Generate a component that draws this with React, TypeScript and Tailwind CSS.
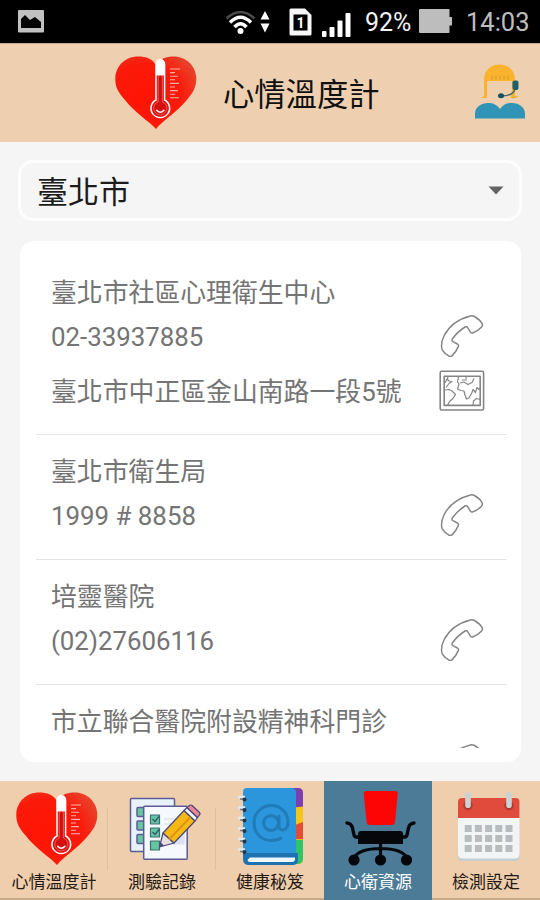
import { useState } from 'react'
import type { ReactNode } from 'react'

interface Resource {
  name: string
  phone: string
  address?: string
}

const resources: Resource[] = [
  { name: '臺北市社區心理衛生中心', phone: '02-33937885', address: '臺北市中正區金山南路一段5號' },
  { name: '臺北市衛生局', phone: '1999 # 8858' },
  { name: '培靈醫院', phone: '(02)27606116' },
  { name: '市立聯合醫院附設精神科門診', phone: '' },
]

function HeartIcon() {
  return (
    <svg width="82" height="74" viewBox="0 0 82 74" fill="none">
      <defs>
        <radialGradient id="heart" cx="0.35" cy="0.55" r="0.7">
          <stop offset="0" stopColor="#ff1403" />
          <stop offset="0.65" stopColor="#fb1a0a" />
          <stop offset="1" stopColor="#e8402a" />
        </radialGradient>
      </defs>
      <path d="M41 73C35 66 20 57 10 44C4 37 0 32 0.3 22C1 9 11 0.5 23 0.5C31 0.5 38 3 41 9C44 3 51 0.5 59 0.5C71 0.5 81 10 81.3 22C81.6 32 77 38 71 45C61 57 47 65 41 73Z" fill="url(#heart)" />
      <path d="M41 44V8a4.3 4.3 0 0 1 8.6 0V44a9.3 9.3 0 1 1-8.6 0Z" fill="#e3100c" stroke="#fff" strokeWidth="1.5" />
      <path d="M41 19.5V8a4.3 4.3 0 0 1 8.6 0V19.5Z" fill="#fff" />
      <path d="M43.2 21.5a2.1 2.1 0 0 1 4.2 0V46a6.6 6.6 0 1 1-4.2 0Z" fill="#d50f10" stroke="#f7a49b" strokeWidth="0.5" />
      <path d="M41.7 54.3q3.6 4 7.2 0" stroke="#fff" strokeWidth="1.5" strokeLinecap="round" />
      <path d="M55 13h10M55 16.6h5M55 20.2h8M55 23.8h5M55 27.4h9M55 31h5M55 34.6h8M55 38.2h5M55 41.8h9" stroke="#ffb3a3" strokeWidth="1.1" />
    </svg>
  )
}

function AgentIcon() {
  return (
    <svg width="50" height="55" viewBox="0 0 50 55" fill="none">
      <path d="M9 32V16C9 6 16 0.5 24.5 0.5S40 6 40 16V32h4l-4 2h-4V17H12v17H6l3-2Z" fill="#fab32e" />
      <path d="M12 16h25v9c0 8-5 13-12 13S12 33 12 25Z" fill="#f0cfae" />
      <path d="M11 14h27v3H11Z" fill="#fab32e" />
      <path d="M17 12v3.5M21 12v3.500M25 12v3.500M29 12v3.500M33 12v3.500" stroke="#c99436" strokeWidth="0.9" />
      <path d="M0 54.5V50C0 43 6 39 13 39C18 39 21 40 25 45C29 40 32 39 37 39C44 39 50 43 50 50V54.5Z" fill="#2f94b6" />
      <path d="M40 25c-1 4-6 7-14 7" stroke="#4f6264" strokeWidth="1.3" />
      <rect x="37.5" y="16.5" width="6" height="9.5" rx="2" fill="#1c6070" />
      <ellipse cx="26" cy="31.7" rx="3" ry="2.5" fill="#125062" />
    </svg>
  )
}

function PhoneIcon() {
  return (
    <svg width="44" height="42" viewBox="-1 0 44 42" fill="none" stroke="#858585" strokeWidth="1.5" strokeLinejoin="round">
      <path d="M29.5 0.9Q31.5 0.5 33.5 1.5Q39 4.7 41.3 9Q41.8 10.5 40.6 11.9Q36.5 16.4 31.5 18Q30.4 18.3 29.4 17.2L26.8 12.8Q25.8 11 24 12Q16.2 17 11.5 23.8Q10.3 25.5 12 26.6L16.4 29Q17.9 30 17.3 31.6Q15 37 11 40.9Q9.6 42 8 41.1Q3.7 38.8 1.2 34.8Q-0.8 28.5 3.2 20.5Q11 5.5 29.5 0.9Z" />
    </svg>
  )
}

function MapIcon() {
  return (
    <svg width="46" height="41" viewBox="0 0 46 41" fill="none" stroke="#858585" strokeWidth="1.2" strokeLinejoin="round">
      <rect x="1.2" y="1.2" width="43.4" height="38.8" rx="1.5" strokeWidth="1.6" />
      <rect x="5.2" y="6.2" width="36" height="29.2" strokeWidth="1.6" />
      <path d="M6 13l2-4 2 2 3 0.5-3 2-3 4M6 20l4-0.5 3 1.500 3.500 3.500-2.500 4-3.500 3-2 4M9 7l-1 3" />
      <path d="M19.500 7l-1 5 1.500 2-1.500 5 3.500 1.500 3 .5 1 4 1.500 4 2.500-1 3-5.500 1-3 2.500 3 .5-2 1-3 2 2 1.500-2M21 13l4-1 4 2.500 4-2 2-4M23 10h5M27 7v2" />
      <path d="M34 35l.5-4 3-2.500 3.500 1" />
    </svg>
  )
}

function RecordIcon() {
  return (
    <svg width="108" height="86" viewBox="0 0 108 86" fill="none" strokeLinejoin="round">
      <g stroke="#5c5b98" strokeWidth="1.5">
        <rect x="22.5" y="17.5" width="44" height="53" rx="1" fill="#e8f1f8" />
        <rect x="29" y="26.5" width="9" height="9" rx="1" fill="#67c6a2" />
        <rect x="29" y="40" width="9" height="9" rx="1" fill="#67c6a2" />
        <rect x="29" y="53.5" width="9" height="9" rx="1" fill="#67c6a2" />
        <rect x="35.7" y="25.3" width="43.5" height="53" rx="1" fill="#f5f9fd" />
      </g>
      <path d="M56 38h13M56 43h8M70 52l6-7v18H58Z" stroke="#dde3f2" fill="#dce0f4" strokeWidth="1.4" />
      <g fill="#67c6a2" stroke="#3d6e75" strokeWidth="1.2">
        <rect x="42.5" y="34" width="9" height="9" />
        <rect x="42.5" y="47" width="9" height="9" />
        <rect x="42.5" y="60" width="9" height="9" />
      </g>
      <path d="M44.5 38l2.5 2.5 4-5M44.5 51l2.5 2.5 4-5" stroke="#2e5967" strokeWidth="1.3" />
      <g stroke="#48477c" strokeWidth="1.2">
        <path d="M51.500 66l3.500-14 11 10Z" fill="#e8dce0" />
        <path d="M55 52L76 29.500l11 10.500L66 62Z" fill="#f7b911" />
        <path d="M76 29.500l3-3 10.500 10-2.500 3.500Z" fill="#eef2fa" />
        <path d="M79 26.500l2.500-2q1.200-1 2.600 0l7.400 7q1.200 1.200 0 2.500l-2 2.500Z" fill="#ec8791" />
      </g>
      <path d="M61 58.500L82.500 36" stroke="#dd941b" strokeWidth="2" />
      <path d="M51.500 66l1.200-4.500 3.300 3Z" fill="#48477c" />
    </svg>
  )
}

function BookIcon() {
  return (
    <svg width="108" height="86" viewBox="0 0 108 86" fill="none">
      <path d="M74 7h8q5 0 5 5V78q0 5-5 5h-8Z" fill="#ebb91b" />
      <path d="M76 7h6q5 0 5 5v14.5H76Z" fill="#7c3eb0" />
      <path d="M79 26.5l8-1v17l-8 2Z" fill="#f5c518" />
      <path d="M79 44l8-3v17H79Z" fill="#e54c35" />
      <path d="M79 59h8V77q0 6-6 6h-4Z" fill="#2fc465" />
      <path d="M31 7H75q5 0 5 5V74H27V11q0-4 4-4Z" fill="#2b96dc" />
      <path d="M27 72H82V80q-1 4-5 4H33q-6 0-6-6Z" fill="#1d72af" />
      <path d="M34 76.5H79V78q0 3-3 3H34q-2.5 0-2.5-2.3Z" fill="#eff6fa" />
      <path d="M22 16h7M22 26.5h7M22 37h7M22 47.5h7M22 58h7M22 68.5h7" stroke="#e4e9ea" strokeWidth="2.3" />
      <path d="M24 18h5M24 28.5h5M24 39h5M24 49.5h5M24 60h5M24 70.5h5" stroke="#6b7b88" strokeWidth="1.4" />
      <g fill="#22364a">
        <circle cx="28.5" cy="18.5" r="2" />
        <circle cx="28.5" cy="29" r="2" />
        <circle cx="28.5" cy="39.5" r="2" />
        <circle cx="28.5" cy="50" r="2" />
        <circle cx="28.5" cy="60.5" r="2" />
        <circle cx="28.5" cy="71" r="2" />
      </g>
      <circle cx="55" cy="42" r="7.5" stroke="#217bb8" strokeWidth="3" />
      <path d="M63 34v11c0 6 9 5.5 9-4C72 31 64 24.5 55 24.5S38 32 38 42s7.500 17.500 17 17.500c4.500 0 8-1 11-3" stroke="#217bb8" strokeWidth="3" />
    </svg>
  )
}

function ChairIcon() {
  return (
    <svg width="108" height="86" viewBox="0 0 108 86" fill="none">
      <path d="M43 10H71q3 0 2.7 3L71 41q-.4 3-3.5 3H46q-3 0-3.4-3L39.7 13q-.3-3 3.3-3Z" fill="#fe0505" />
      <path d="M37 50H76q3 0 3 3V63H34V53q0-3 3-3Z" fill="#05070a" />
      <path d="M23 42q4.500.5 5.500 5l1.500 7q.4 2 2.500 2h3M90 42q-4.500.5-5.500 5l-1.500 7q-.4 2-2.500 2h-3" stroke="#05070a" strokeWidth="3.4" strokeLinecap="round" />
      <path d="M56.5 62V79M30 77q5-9.500 26.500-9.500T83 77" stroke="#05070a" strokeWidth="3.2" />
      <circle cx="30" cy="79" r="5.6" fill="#05070a" />
      <circle cx="56.5" cy="79" r="5.6" fill="#05070a" />
      <circle cx="82.5" cy="79" r="5.6" fill="#05070a" />
    </svg>
  )
}

function CalendarIcon() {
  return (
    <svg width="108" height="86" viewBox="0 0 108 86" fill="none">
      <rect x="26" y="20" width="61.5" height="60" rx="4.5" fill="#c5ced1" />
      <rect x="26" y="18" width="61.5" height="59.5" rx="4.5" fill="#f1f5f6" />
      <path d="M26 37V21q0-4 4-4H83.500q4 0 4 4V37Z" fill="#e14b3b" />
      <circle cx="36" cy="24.5" r="4.8" fill="#b43a2f" />
      <circle cx="77" cy="24.5" r="4.8" fill="#b43a2f" />
      <rect x="33.2" y="11" width="5.6" height="16" rx="2.8" fill="#cad2d5" />
      <rect x="74.2" y="11" width="5.6" height="16" rx="2.8" fill="#cad2d5" />
      <path d="M32.7 47.500H81M32.700 57.500H81M32.700 67.500H81" stroke="#b7bcbf" strokeWidth="7" strokeDasharray="7 3.2" />
    </svg>
  )
}

function StatusBar() {
  return (
    <div className="flex h-[43px] shrink-0 items-center bg-black font-['Roboto',sans-serif] text-[25px] leading-[43px] text-white">
      <svg className="ml-[18px]" width="26" height="23" viewBox="0 0 26 23">
        <rect width="26" height="22.5" rx="1" fill="#c1c1c1" />
        <path d="M3 18V9l4-4 5 5 5-3 6 5v6Z" fill="#050505" />
      </svg>
      <svg className="ml-[181px]" width="31" height="26" viewBox="0 0 31 26" fill="none" strokeWidth="3.5">
        <path d="M1.5 9.500Q15.500-3.500 29.500 9.500" stroke="#4b4b4b" strokeWidth="2.5" />
        <path d="M5 13.500Q15.500 3 26 13.500M9.500 18Q15.500 11.500 21.500 18" stroke="#fff" />
        <circle cx="15.5" cy="22" r="3" fill="#fff" />
      </svg>
      <svg className="ml-[4px]" width="10" height="22" viewBox="0 0 10 22" fill="#fff">
        <path d="M5 0l4.500 8.500H.5ZM5 21.500L.5 12.500h9Z" />
      </svg>
      <svg className="ml-[19px]" width="23" height="28" viewBox="0 0 23 28">
        <path d="M2 .5H16L22.500 7V26q0 1.500-1.500 1.500H2Q.5 27.500.5 26V2Q.5.500 2 .5Z" fill="#f7f7f7" />
        <rect x="4.5" y="6.5" width="14" height="16" fill="#000" />
        <text x="11.5" y="19.5" textAnchor="middle" fontSize="14" fontWeight="700" fill="#fff">1</text>
      </svg>
      <svg className="mt-[6px] ml-[9px]" width="30" height="26" viewBox="0 0 30 26" fill="#fff">
        <rect x="1" y="19" width="4.5" height="6" rx="1" />
        <rect x="8.5" y="15" width="5" height="10" rx="1" />
        <rect x="16.5" y="8.5" width="5" height="16.5" rx="1" />
        <rect x="24.5" y="1" width="5" height="24" rx="1" />
      </svg>
      <span className="mt-[2px] ml-[14px] w-[48px] text-[#f2f2f2]">92%</span>
      <svg className="ml-[6px]" width="34" height="25" viewBox="0 0 34 25" fill="#bdbdbd">
        <path d="M1 0H29.500q1 0 1 1V8H33V16.500H30.500V23q0 1-1 1H1q-1 0-1-1V1Q0 0 1 0Z" />
      </svg>
      <span className="mt-[2px] ml-[13px] text-[25.5px] text-[#bebebe]">14:03</span>
    </div>
  )
}

function ResourceItem({ name, phone, address }: Resource) {
  return (
    <li className="border-b border-[#e4e4e4] pt-[13px] pr-[22px] pb-[21px] pl-[15px]">
      <p className="h-[45px] pt-[2px] leading-[45px]">{name}</p>
      <div className="flex h-[45px] items-center justify-between">
        <span className="pt-[2px] leading-[45px]">{phone}</span>
        <div className="-mt-[2px] flex w-[46px] justify-center">
          <PhoneIcon />
        </div>
      </div>
      {address && (
        <div className="flex h-[54px] items-center justify-between pt-[8px]">
          <span className="pt-[4px] leading-[44px] whitespace-nowrap">{address}</span>
          <MapIcon />
        </div>
      )}
    </li>
  )
}

const tabs: { label: string; icon: ReactNode }[] = [
  { label: '心情溫度計', icon: <div className="mt-[11px] ml-[16px] h-[75px]"><HeartIcon /></div> },
  { label: '測驗記錄', icon: <RecordIcon /> },
  { label: '健康秘笈', icon: <BookIcon /> },
  { label: '心衛資源', icon: <ChairIcon /> },
  { label: '檢測設定', icon: <CalendarIcon /> },
]

export default function App() {
  const [active, setActive] = useState(3)

  return (
    <div className="flex h-[900px] w-[540px] flex-col overflow-hidden bg-[#f5f5f5] font-['Roboto','Noto_Sans_CJK_TC',sans-serif]">
      <StatusBar />

      <header className="flex h-[99px] shrink-0 items-center border-t border-[#bfa791] bg-[#eecfb0] pl-[115px]">
        <HeartIcon />
        <h1 className="mt-[6px] ml-[26px] text-[31.3px] leading-[44px] text-[#111]">心情溫度計</h1>
        <div className="-mt-[4px] mr-[15px] ml-auto">
          <AgentIcon />
        </div>
      </header>

      <button className="mx-[18px] mt-[18px] flex h-[61px] shrink-0 items-center justify-between rounded-[15px] border-[3px] border-[#fdfdfd] pr-[15px] pl-[16px] text-left">
        <span className="pt-[4px] text-[31px] leading-[50px] text-[#1c1c1c]">臺北市</span>
        <svg width="16" height="9" viewBox="0 0 16 9">
          <path d="M.5.500h15L8 8.500Z" fill="#646464" />
        </svg>
      </button>

      <main className="mt-[20px] mr-[19px] ml-[20px] h-[521px] shrink-0 rounded-[14px] bg-white pt-[15px] pr-[14px] pb-[14px] pl-[16px]">
        <ul className="h-full overflow-hidden text-[25.85px] text-[#747474]">
          {resources.map((r) => (
            <ResourceItem key={r.name} {...r} />
          ))}
        </ul>
      </main>

      <nav className="mt-auto grid h-[119px] shrink-0 grid-cols-5 border-b-[2px] border-[#c6a78a] bg-[#efceae]">
        {tabs.map((tab, i) => (
          <button
            key={tab.label}
            onClick={() => setActive(i)}
            className={`relative flex flex-col text-left ${active === i ? 'h-[119px] bg-[#4c7b98] text-white' : 'text-[#251a12]'}`}
          >
            {tab.icon}
            <span className="w-full pt-[1px] text-center text-[17px] leading-[28px] whitespace-nowrap">{tab.label}</span>
            {i < 2 && <span className="absolute top-[27px] right-0 h-[62px] w-px bg-[#dfbf9f]" />}
          </button>
        ))}
      </nav>
    </div>
  )
}
